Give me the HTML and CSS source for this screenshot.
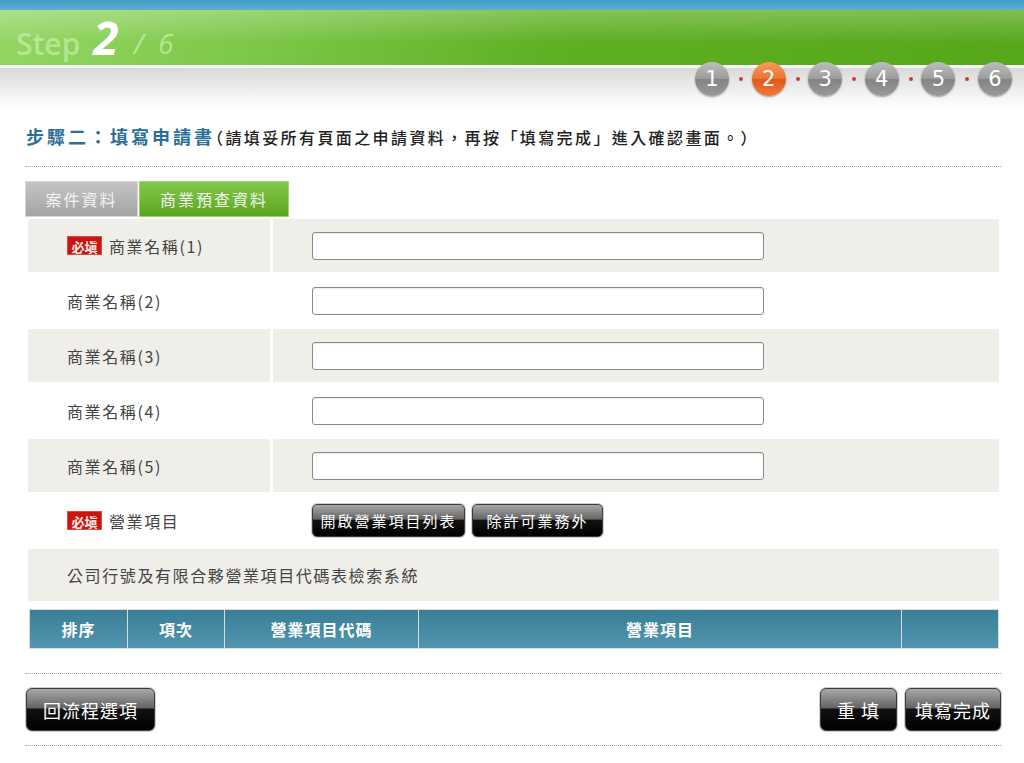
FILE: index.html
```html
<!DOCTYPE html>
<html lang="zh-Hant">

<head>
    <meta charset="UTF-8">
    <meta name="viewport" content="width=device-width, initial-scale=1.0">
    <title>步驟二：填寫申請書</title>
    <link rel="stylesheet" href="styles.css">
</head>

<body>

    <div class="header">
        <div class="top-strip"></div>
        <div class="green-band">
            <span class="step-word">Step</span>
            <span class="step-now">2</span>
            <span class="step-total">/ &nbsp;6</span>
        </div>
        <div class="gray-band"></div>

        <ul class="steps">
            <li class="ball">1</li>
            <li class="dot"></li>
            <li class="ball active">2</li>
            <li class="dot"></li>
            <li class="ball">3</li>
            <li class="dot"></li>
            <li class="ball">4</li>
            <li class="dot"></li>
            <li class="ball">5</li>
            <li class="dot"></li>
            <li class="ball">6</li>
        </ul>
    </div>

    <div class="main">
        <h2 class="title">步驟二：填寫申請書<span class="note">（請填妥所有頁面之申請資料，再按「填寫完成」進入確認畫面。）</span></h2>

        <div class="tabs">
            <div class="tab">案件資料</div>
            <div class="tab on">商業預查資料</div>
        </div>

        <div class="form">
            <div class="row gray">
                <div class="label"><span class="must">必塡</span>商業名稱(1)</div>
                <div class="field"><input class="text" type="text"></div>
            </div>
            <div class="row">
                <div class="label">商業名稱(2)</div>
                <div class="field"><input class="text" type="text"></div>
            </div>
            <div class="row gray">
                <div class="label">商業名稱(3)</div>
                <div class="field"><input class="text" type="text"></div>
            </div>
            <div class="row">
                <div class="label">商業名稱(4)</div>
                <div class="field"><input class="text" type="text"></div>
            </div>
            <div class="row gray">
                <div class="label">商業名稱(5)</div>
                <div class="field"><input class="text" type="text"></div>
            </div>
            <div class="row">
                <div class="label"><span class="must">必塡</span>營業項目</div>
                <div class="field">
                    <button class="btn small wide">開啟營業項目列表</button>
                    <button class="btn small">除許可業務外</button>
                </div>
            </div>
            <div class="row-full">公司行號及有限合夥營業項目代碼表檢索系統</div>
        </div>

        <div class="grid-head">
            <div class="col">排序</div>
            <div class="col">項次</div>
            <div class="col">營業項目代碼</div>
            <div class="col">營業項目</div>
            <div class="col"></div>
        </div>

        <div class="actions">
            <button class="btn big back">回流程選項</button>
            <div class="right">
                <button class="btn big reset">重 填</button>
                <button class="btn big done">填寫完成</button>
            </div>
        </div>
    </div>

</body>

</html>
```

FILE: styles.css
```css
* {
    margin: 0;
    padding: 0;
    list-style: none;
    box-sizing: border-box;
}

body {
    width: 1024px;
    background: #fff;
    font-family: "Noto Sans CJK TC", "Noto Sans", sans-serif;
    color: #444;
}

/* 頁首 */
.header {
    position: relative;
    height: 110px;
}

.top-strip {
    height: 10px;
    background: linear-gradient(180deg, #3f9bc4, #5cb0d2);
}

.green-band {
    height: 58px;
    display: flex;
    align-items: flex-end;
    padding: 0 0 5px 16px;
    background: linear-gradient(180deg, rgba(255, 255, 255, .25), rgba(255, 255, 255, 0) 60%),
        linear-gradient(90deg, #93d664 0%, #7cc748 25%, #5eaf22 55%, #56a81a 100%);
    border-bottom: 3px solid #f4f4f4;
    font-family: "Open Sans", "DejaVu Sans", sans-serif;
}

.step-word {
    font-size: 30px;
    font-weight: 600;
    color: rgba(230, 255, 210, .45);
    line-height: 1;
    margin-bottom: 1px;
}

.step-now {
    font-size: 46px;
    font-weight: 700;
    font-style: italic;
    color: #fff;
    line-height: 1;
    margin-left: 13px;
}

.step-total {
    font-size: 28px;
    font-style: italic;
    color: rgba(230, 255, 210, .5);
    line-height: 1;
    margin: 0 0 3px 15px;
}

.gray-band {
    height: 42px;
    background: linear-gradient(180deg, #d9d9d9, #f6f6f6 70%, #fff);
}

.steps {
    position: absolute;
    top: 62px;
    left: 695px;
    display: flex;
    align-items: center;
}

.ball {
    width: 34px;
    height: 34px;
    border-radius: 50%;
    display: flex;
    align-items: center;
    justify-content: center;
    font-family: "DejaVu Sans", sans-serif;
    font-size: 21px;
    color: #fff;
    background: linear-gradient(180deg, #bdbdbd 0%, #9d9d9d 48%, #848484 52%, #9a9a9a 100%);
    box-shadow: 0 1px 2px rgba(0, 0, 0, .35);
}

.ball.active {
    background: linear-gradient(180deg, #f59a5e 0%, #ee7434 48%, #e05a1c 52%, #ef7a3a 100%);
}

.dot {
    width: 22.6px;
    height: 4px;
    position: relative;
}

.dot::after {
    content: '';
    position: absolute;
    left: 10px;
    top: 0;
    width: 4px;
    height: 4px;
    border-radius: 50%;
    background: #d33a2a;
}

/* 內容 */
.main {
    padding: 13px 23px 0 25px;
}

.title {
    font-size: 18px;
    font-weight: 700;
    color: #2b6f97;
    line-height: 26px;
    letter-spacing: 3px;
    padding: 0 0 16px 1px;
    border-bottom: 1px dotted #7fa9c4;
}

.note {
    font-size: 16px;
    font-weight: 500;
    color: #222;
    letter-spacing: 2.4px;
    margin-left: -8px;
}

.tabs {
    display: flex;
    gap: 1px;
    margin-top: 14px;
}

.tab {
    height: 36px;
    width: 113px;
    display: flex;
    align-items: center;
    justify-content: center;
    font-size: 16px;
    letter-spacing: 2px;
    color: #f3f3f3;
    background: linear-gradient(180deg, #c4c4c4, #a4a4a4);
    border: 1px solid #d6d6d6;
}

.tab.on {
    width: 150px;
    background: linear-gradient(180deg, #82c94b, #5aa71d);
    border-color: #9ed46f;
}

.form {
    margin: 2px 2px 0 3px;
    display: flex;
    flex-direction: column;
    gap: 2px;
}

.row {
    height: 53px;
    display: grid;
    grid-template-columns: 242px 1fr;
    gap: 3px;
}

.row.gray .label,
.row.gray .field,
.row-full {
    background: #efeee9;
}

.label {
    display: flex;
    align-items: center;
    padding-left: 39px;
    font-size: 16px;
    letter-spacing: 1.6px;
    color: #444;
}

.must {
    display: inline-block;
    width: 35px;
    height: 19px;
    line-height: 19px;
    margin-right: 7px;
    text-align: center;
    font-size: 13px;
    font-weight: 700;
    letter-spacing: 0;
    color: #fde8e0;
    background: #c8150f;
    border: 1px solid #e04a40;
}

.field {
    display: flex;
    align-items: center;
    gap: 7px;
    padding-left: 39px;
}

.text {
    width: 452px;
    height: 28px;
    border: 1px solid #8a8a8a;
    border-radius: 3px;
    background: #fff;
    box-shadow: inset 0 1px 1px rgba(0, 0, 0, .08);
}

.row-full {
    height: 52px;
    display: flex;
    align-items: center;
    padding-left: 39px;
    font-size: 16px;
    letter-spacing: 1.6px;
    color: #444;
}

/* 按鈕 */
.btn {
    font-family: "Noto Sans CJK TC", sans-serif;
    color: #fff;
    border: 1px solid #3c3c3c;
    cursor: pointer;
    background: linear-gradient(180deg, #a8a8a8 0%, #666 45%, #111 50%, #000 100%);
    box-shadow: 0 0 0 1px #cfcfcf;
}

.btn.small {
    width: 131px;
    height: 33px;
    padding: 0;
    border-radius: 5px;
    font-size: 15px;
    letter-spacing: 2px;
}

.btn.small.wide {
    width: 153px;
}

.grid-head {
    margin: 8px 2px 0 4px;
    display: grid;
    grid-template-columns: 97px 96px 193px 482px 1fr;
    gap: 1px;
    height: 40px;
    background: #d8dcdd;
    border: 1px solid #d8dcdd;
}

.col {
    display: flex;
    align-items: center;
    justify-content: center;
    color: #fff;
    font-size: 16px;
    font-weight: 700;
    letter-spacing: 1px;
    background: linear-gradient(180deg, #397e97, #5196ae);
}

.actions {
    margin-top: 24px;
    border-top: 1px dotted #7fa9c4;
    border-bottom: 1px dotted #7fa9c4;
    padding: 14px 0 14px 1px;
    display: flex;
    justify-content: space-between;
}

.right {
    display: flex;
    gap: 8px;
}

.btn.big {
    height: 43px;
    padding: 0;
    border-radius: 6px;
    font-size: 18px;
    letter-spacing: 1px;
}

.btn.back {
    width: 129px;
}

.btn.reset {
    width: 77px;
}

.btn.done {
    width: 96px;
}
```
